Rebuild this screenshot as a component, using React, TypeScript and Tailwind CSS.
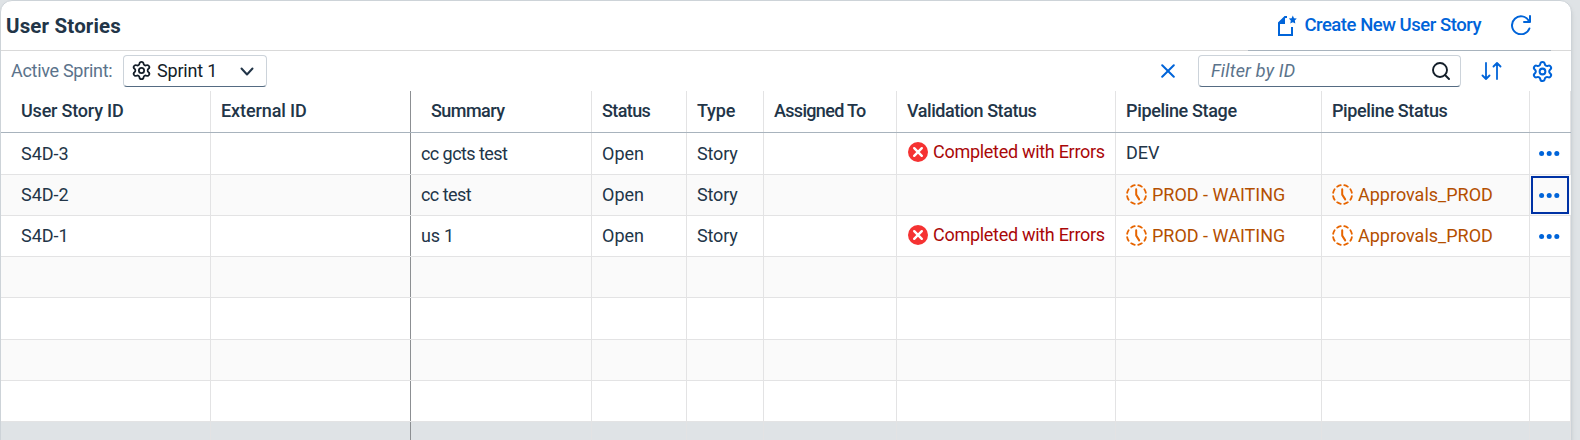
import React from "react";
import { Settings } from "lucide-react";

type Row = {
  id: string;
  summary: string;
  summaryClass: string;
  validation?: boolean;
  stage: string;
  status?: string;
  focused?: boolean;
};

const rows: Row[] = [
  { id: "S4D-3", summary: "cc gcts test", summaryClass: "tracking-[-0.57px]", validation: true, stage: "DEV" },
  { id: "S4D-2", summary: "cc test", summaryClass: "tracking-[-0.55px]", stage: "PROD - WAITING", status: "Approvals_PROD", focused: true },
  { id: "S4D-1", summary: "us 1", summaryClass: "tracking-[-0.2px]", validation: true, stage: "PROD - WAITING", status: "Approvals_PROD" },
];

const GRID = "grid grid-cols-[210px_200px_181px_95px_77px_133px_219px_206px_208px_41px]";

const ErrorIcon = () => (
  <svg viewBox="0 0 20 20" className="size-5 shrink-0">
    <circle cx="10" cy="10" r="10" fill="#f53232" />
    <path d="M6.2 6.2 L13.8 13.8 M13.8 6.2 L6.2 13.8" stroke="#fff" strokeWidth="2.4" strokeLinecap="round" />
  </svg>
);

const PendingIcon = () => (
  <svg viewBox="0 0 21 21" className="size-[21px] shrink-0" fill="none" stroke="#e76500" strokeLinecap="round">
    <circle cx="10.5" cy="10.5" r="9.5" strokeWidth="1.8" pathLength="100" strokeDasharray="6.5 6" strokeDashoffset="-3" />
    <path d="M10.2 5.3 V10.6 L13.2 15.4" strokeWidth="2" strokeLinejoin="round" />
  </svg>
);

const Dots = () => (
  <svg viewBox="0 0 21 5" className="h-[5px] w-[21px]" fill="#0064d9">
    <circle cx="2.6" cy="2.5" r="2.5" />
    <circle cx="10.2" cy="2.5" r="2.5" />
    <circle cx="17.8" cy="2.5" r="2.5" />
  </svg>
);

const Cell = ({ children, dark }: { children?: React.ReactNode; dark?: boolean }) => (
  <div className={`flex items-center border-r pl-[10px] whitespace-nowrap ${dark ? "border-r-[#8c8f92]" : "border-r-[#e3e3e4]"}`}>{children}</div>
);

const Waiting = ({ text }: { text: string }) => (
  <div className="flex items-center gap-[5px] text-[#b44f00]">
    <PendingIcon />
    <span>{text}</span>
  </div>
);

const Head = ({ text, className }: { text: string; className: string }) => <span className={`pb-0.5 font-medium ${className}`}>{text}</span>;

const EmptyCells = () => (
  <>
    <Cell /><Cell dark /><Cell /><Cell /><Cell /><Cell /><Cell /><Cell /><Cell /><Cell />
  </>
);

export default function App() {
  return (
    <div className="h-[440px] w-[1580px] overflow-hidden bg-[#dfe3e6] font-['Roboto',sans-serif] text-[18px] text-[#223548]">
      <div className="h-[460px] w-[1572px] overflow-hidden rounded-xl border border-[#cdd3d8] bg-white shadow-md">
        <header className="relative flex h-[50px] items-center border-b border-[#d9d9d9]">
          <h1 className="ml-[5px] pt-0.5 text-[20.5px] font-bold tracking-[0.16px]">User Stories</h1>
          <div className="mr-[40px] ml-auto flex items-center pb-px text-[#0064d9]">
            <svg viewBox="0 0 20 22" className="mt-px mr-[7px] h-[22px] w-5" fill="none" stroke="currentColor" strokeWidth="2">
              <path d="M10 2 H8 L2 8 V20 H15 V12" />
              <path d="M2 9 L8 2 V9 Z" fill="currentColor" stroke="none" />
              <path fill="currentColor" stroke="none" d="M15.8 0.6 L17 3.2 L19.8 3.6 L17.8 5.6 L18.3 8.6 L15.8 7.2 L13.3 8.6 L13.8 5.6 L11.8 3.6 L14.6 3.2 Z" />
            </svg>
            <span className="pt-px text-[18.5px] font-medium tracking-[-0.47px]">Create New User Story</span>
            <svg viewBox="0 0 20 20" className="ml-[30px] size-5" fill="none" stroke="currentColor" strokeWidth="2" strokeLinecap="round" strokeLinejoin="round">
              <path d="M18.4 13.5 A9 9 0 1 1 17.8 5.8 M19 1 V7 H13" />
            </svg>
          </div>
          <div className="absolute right-[20px] -bottom-px h-px w-[303px] bg-[#a8b3bd]" />
        </header>
        <div className="flex h-10 items-center">
          <span className="ml-[10px] w-[102px] pb-0.5 tracking-[-0.3px] whitespace-nowrap text-[#5b738b]">Active Sprint:</span>
          <button className="ml-[10px] flex h-8 w-[144px] items-center rounded border border-[#ccd3da] border-b-[#556b82] pl-[7px] tracking-[-0.2px] text-[#131e29]">
            <Settings className="mr-[5px] mb-px size-[21px]" strokeWidth={2} />
            <span className="pb-0.5">Sprint 1</span>
            <svg viewBox="0 0 14 9" className="mr-3 ml-auto h-[9px] w-[14px]" fill="none" stroke="#223548" strokeWidth="2" strokeLinecap="round" strokeLinejoin="round">
              <path d="M1.5 1.5 L7 7.5 L12.5 1.5" />
            </svg>
          </button>
          <svg viewBox="0 0 14 14" className="ml-auto size-[14px] text-[#0064d9]" stroke="currentColor" strokeWidth="2" strokeLinecap="round">
            <path d="M1.2 1.2 L12.8 12.8 M12.8 1.2 L1.2 12.8" />
          </svg>
          <div className="ml-[23px] flex h-8 w-[263px] items-center rounded border border-[#ccd3da] border-b-[#556b82] pr-[10px] pl-3">
            <span className="pb-0.5 tracking-[0.2px] text-[#5b738b] italic">Filter by ID</span>
            <svg viewBox="0 0 18 18" className="ml-auto size-[18px]" fill="none" stroke="#131e29" strokeWidth="1.9" strokeLinecap="round">
              <circle cx="8" cy="8" r="7" />
              <path d="M13 13 L17 17" />
            </svg>
          </div>
          <svg viewBox="0 0 21 18" className="ml-5 h-[18px] w-[21px] text-[#0064d9]" fill="none" stroke="currentColor" strokeWidth="1.8" strokeLinecap="round" strokeLinejoin="round">
            <path d="M5 1 V17 M1.5 13.5 L5 17 L8.5 13.5 M16 17 V1 M12.5 4.5 L16 1 L19.5 4.5" />
          </svg>
          <Settings className="mr-[17px] ml-[29px] size-[23px] text-[#0064d9]" strokeWidth={2.1} />
        </div>
        <div className={`${GRID} h-[42px] border-b border-[#a8b3bd]`}>
          <Cell><Head text="User Story ID" className="ml-[10px] tracking-[-0.2px]" /></Cell>
          <Cell dark><Head text="External ID" className="tracking-[-0.1px]" /></Cell>
          <Cell><Head text="Summary" className="ml-[10px] tracking-[-0.55px]" /></Cell>
          <Cell><Head text="Status" className="tracking-[-0.6px]" /></Cell>
          <Cell><Head text="Type" className="tracking-[-0.2px]" /></Cell>
          <Cell><Head text="Assigned To" className="tracking-[-0.68px]" /></Cell>
          <Cell><Head text="Validation Status" className="tracking-[-0.46px]" /></Cell>
          <Cell><Head text="Pipeline Stage" className="tracking-[-0.35px]" /></Cell>
          <Cell><Head text="Pipeline Status" className="tracking-[-0.37px]" /></Cell>
          <Cell />
        </div>
        {rows.map((r, i) => {
          const lift = i === 0 ? "" : "pb-0.5";
          return (
            <div key={r.id} className={`${GRID} border-b border-[#e3e3e4] ${i === 0 ? "h-[42px]" : "h-[41px]"} ${i === 1 ? "bg-[#fafafa]" : ""}`}>
              <Cell><span className={`ml-[10px] ${lift}`}>{r.id}</span></Cell>
              <Cell dark />
              <Cell><span className={`${lift} ${r.summaryClass}`}>{r.summary}</span></Cell>
              <Cell><span className={lift}>Open</span></Cell>
              <Cell><span className={`tracking-[-0.15px] ${lift}`}>Story</span></Cell>
              <Cell />
              <Cell>
                {r.validation && (
                  <div className={`ml-px flex items-center gap-[5px] text-[#aa0808] ${i === 0 ? "pb-1" : "pb-[3px]"}`}>
                    <ErrorIcon />
                    <span className="tracking-[-0.29px]">Completed with Errors</span>
                  </div>
                )}
              </Cell>
              <Cell>{r.stage === "DEV" ? <span className="pb-[3px]">DEV</span> : <div className="pb-0.5"><Waiting text={r.stage} /></div>}</Cell>
              <Cell>{r.status && <div className="pb-0.5"><Waiting text={r.status} /></div>}</Cell>
              <div className={`flex items-center justify-center ${r.focused ? "my-px mr-[2px] ml-px border-2 border-[#0032a5] pr-px" : "border-r border-[#e3e3e4] pr-px"}`}><Dots /></div>
            </div>
          );
        })}
        {[0, 1, 2, 3].map((i) => (
          <div key={i} className={`${GRID} border-b border-[#e3e3e4] ${i === 1 ? "h-[42px]" : "h-[41px]"} ${i % 2 === 0 ? "bg-[#fafafa]" : ""}`}>
            <EmptyCells />
          </div>
        ))}
        <div className={`${GRID} h-10 bg-[#dfe3e6]`}>
          <EmptyCells />
        </div>
      </div>
    </div>
  );
}
